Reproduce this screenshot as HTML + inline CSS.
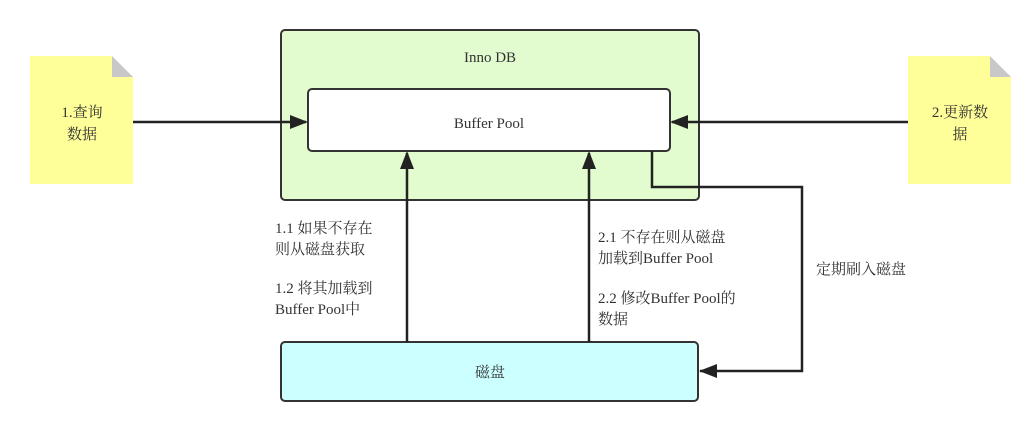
<!DOCTYPE html>
<html><head><meta charset="utf-8"><style>
html,body{margin:0;padding:0;background:#fff;}
svg{display:block;}
text{font-family:"Liberation Serif","Noto Serif CJK SC",serif;font-size:15px;fill:#333;}
</style></head><body>
<svg width="1028" height="429" viewBox="0 0 1028 429">
<path d="M30,56 H112 L133,77 V184 H30 Z" fill="#ffff99"/>
<path d="M112,56 L133,77 H112 Z" fill="#c8c8c8"/>
<text x="82" y="117" text-anchor="middle">1.查询</text>
<text x="82" y="139" text-anchor="middle">数据</text>
<path d="M908,56 H990 L1011,77 V184 H908 Z" fill="#ffff99"/>
<path d="M990,56 L1011,77 H990 Z" fill="#c8c8c8"/>
<text x="960" y="117" text-anchor="middle">2.更新数</text>
<text x="960" y="139" text-anchor="middle">据</text>
<rect x="281" y="30" width="418" height="170" rx="4" fill="#e3fccf" stroke="#333" stroke-width="2"/>
<text x="490" y="62" text-anchor="middle">Inno DB</text>
<rect x="308" y="89" width="362" height="62" rx="4" fill="#fff" stroke="#333" stroke-width="2"/>
<text x="489" y="128" text-anchor="middle">Buffer Pool</text>
<rect x="281" y="342" width="417" height="59" rx="4" fill="#ccffff" stroke="#333" stroke-width="2"/>
<text x="490" y="377" text-anchor="middle">磁盘</text>
<g stroke="#222" stroke-width="2.5" fill="none">
<line x1="133" y1="122" x2="306" y2="122"/>
<line x1="908" y1="122" x2="672" y2="122"/>
<line x1="407" y1="342" x2="407" y2="153"/>
<line x1="589" y1="342" x2="589" y2="153"/>
<polyline points="652,151 652,187 802,187 802,371 700,371"/>
</g>
<g fill="#222">
<path d="M308,122 L290,115 L290,129 Z"/>
<path d="M670,122 L688,115 L688,129 Z"/>
<path d="M407,151 L400,169 L414,169 Z"/>
<path d="M589,151 L582,169 L596,169 Z"/>
<path d="M699,371 L717,364 L717,378 Z"/>
</g>
<text x="275" y="233">1.1 如果不存在</text>
<text x="275" y="254">则从磁盘获取</text>
<text x="275" y="293">1.2 将其加载到</text>
<text x="275" y="314">Buffer Pool中</text>
<text x="598" y="242">2.1 不存在则从磁盘</text>
<text x="598" y="263">加载到Buffer Pool</text>
<text x="598" y="303">2.2 修改Buffer Pool的</text>
<text x="598" y="324">数据</text>
<text x="816" y="274">定期刷入磁盘</text>
</svg>
</body></html>
